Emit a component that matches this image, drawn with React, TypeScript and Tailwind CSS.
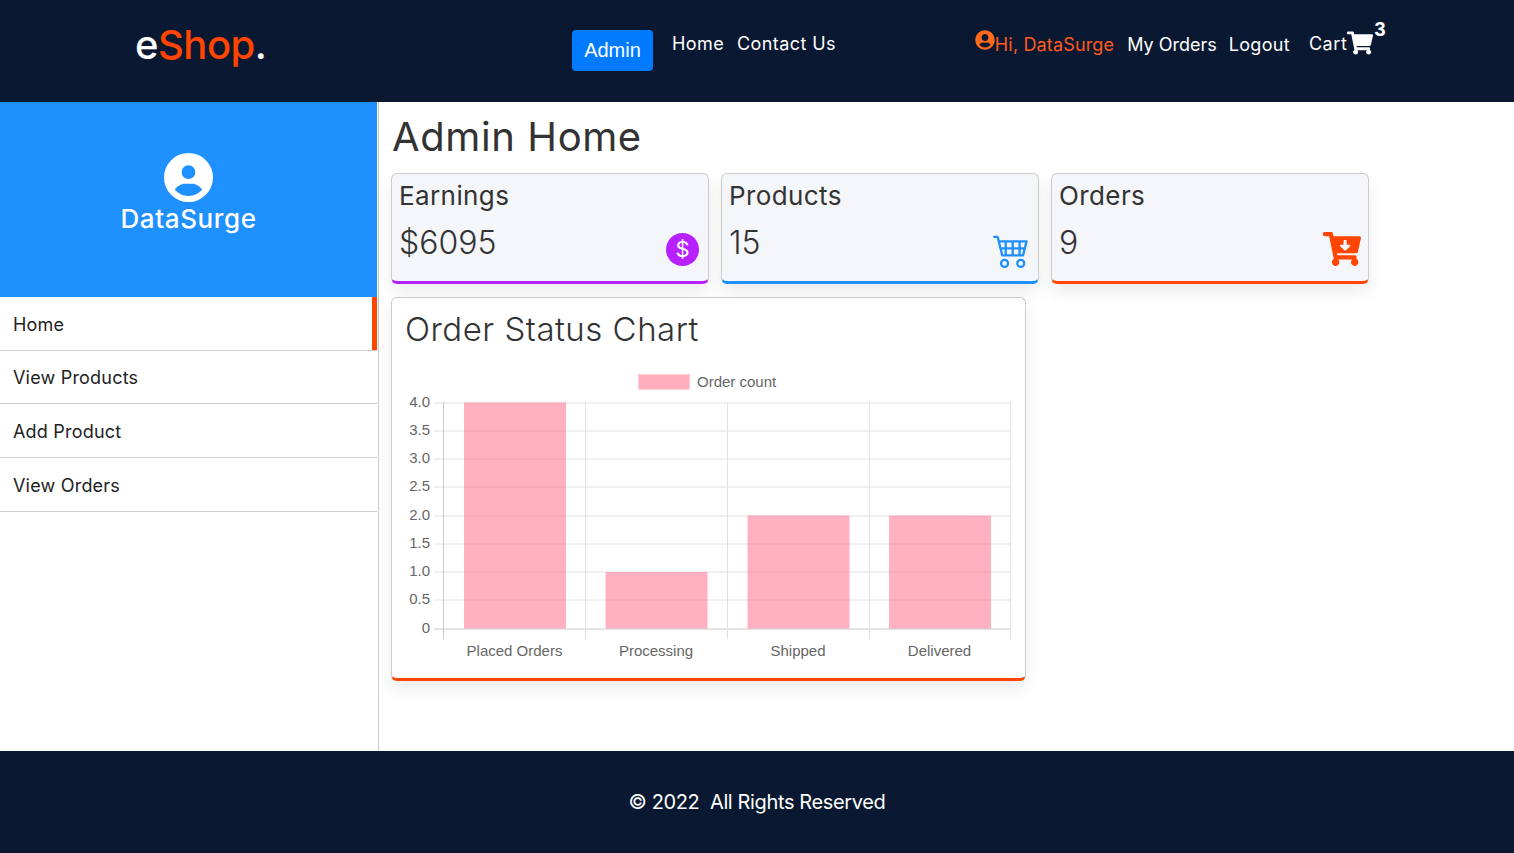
import { FaCartArrowDown, FaShoppingCart, FaUserCircle } from 'react-icons/fa';
import { FaCircleUser } from 'react-icons/fa6';
import { BsCart4 } from 'react-icons/bs';

const stats = [
  { title: 'Earnings', value: '$6095', bar: 'border-b-[#b721ff]' },
  { title: 'Products', value: '15', bar: 'border-b-[#1e90ff]' },
  { title: 'Orders', value: '9', bar: 'border-b-[#ff4500]' },
];

const sideLinks = [
  { label: 'Home', h: 'h-[54px]', active: true },
  { label: 'View Products', h: 'h-[53px]' },
  { label: 'Add Product', h: 'h-[54px]' },
  { label: 'View Orders', h: 'h-[54px]' },
];

const bars = [
  { label: 'Placed Orders', x: 464, count: 4 },
  { label: 'Processing', x: 605.5, count: 1 },
  { label: 'Shipped', x: 747.5, count: 2 },
  { label: 'Delivered', x: 889, count: 2 },
];

const yTicks = ['4.0', '3.5', '3.0', '2.5', '2.0', '1.5', '1.0', '0.5', '0'];
const xGrid = [443.5, 585.5, 727.5, 869.5, 1010.5];
const chartFont = '"Liberation Sans", Arial, sans-serif';

// svg origin sits at the page position of the chart box
function OrderChart() {
  const ox = 400;
  const oy = 370;
  const top = 402.5;
  const step = 28.25;
  return (
    <svg width="620" height="296" viewBox={`${ox} ${oy} 620 296`} className="block" style={{ fontFamily: chartFont }}>
      <rect x="638.5" y="374.5" width="51" height="15" fill="#ffacbf" stroke="#ffd0da" />
      <text x="697" y="387" fontSize="15" fill="#666">Order count</text>
      {yTicks.map((t, i) => {
        const y = Math.round(top + i * step) + 0.5;
        return (
          <g key={t}>
            <line x1="434" x2="1011" y1={y - 0.5} y2={y - 0.5} stroke={i === 8 ? '#c9c9c9' : '#e2e2e2'} />
            <text x="430" y={y + 3.5} fontSize="15" fill="#666" textAnchor="end">{t}</text>
          </g>
        );
      })}
      {xGrid.map((x, i) => (
        <line key={x} x1={x} x2={x} y1="402" y2="639" stroke={i === 0 ? '#c9c9c9' : '#e2e2e2'} />
      ))}
      {bars.map(b => (
        <g key={b.label}>
          <rect x={b.x} y={628.5 - b.count * 56.5} width="102" height={b.count * 56.5} fill="#ff6384" fillOpacity="0.5" />
          <text x={b.x + 50.5} y="656" fontSize="15" fill="#666" textAnchor="middle">{b.label}</text>
        </g>
      ))}
    </svg>
  );
}

export default function App() {
  return (
    <div className="flex min-h-[853px] flex-col bg-white font-['Inter','Liberation_Sans',sans-serif] text-[#333]">
      <header className="flex h-[102px] shrink-0 bg-[#0a1931] text-white">
        <div className="w-[572px] pl-[135px] pt-[19px] text-[40px] font-medium leading-[52px] tracking-[-0.5px]">
          e<span className="text-[#ff4500]">Shop</span>.
        </div>
        <button className="mt-[30px] h-[41px] w-[81px] rounded-[4px] bg-[#007bff] font-['Liberation_Sans',sans-serif] text-xl leading-[41px] text-white">
          Admin
        </button>
        <nav className="ml-[19px] flex gap-[13px] pt-[32px] text-lg leading-6 tracking-[0.4px]">
          <span>Home</span>
          <span>Contact Us</span>
        </nav>
        <div className="ml-[139px] flex items-start pt-[30px] text-lg leading-6">
          <FaUserCircle className="text-xl text-[#ff6a1f]" />
          <span className="mt-[3px] tracking-[0.15px] text-[#ff5a1f]">Hi, DataSurge</span>
          <span className="ml-[13px] mt-[3px]">My Orders</span>
          <span className="ml-[12px] mt-[3px] tracking-[0.3px]">Logout</span>
          <span className="ml-[19px] mt-[2px] tracking-[0.6px]">Cart</span>
          <span className="relative">
            <FaShoppingCart className="text-[26px]" />
            <span className="absolute left-[27px] top-[-13px] font-['Liberation_Sans',sans-serif] text-xl font-bold leading-6">3</span>
          </span>
        </div>
      </header>

      <div className="flex flex-1">
        <aside className="w-[379px] shrink-0 border-r border-[#ccc] pr-[1px]">
          <div className="flex h-[195px] flex-col items-center bg-[#1e90ff] pt-[51px] text-white">
            <FaCircleUser className="text-[49px]" />
            <div className="mt-[1px] text-[26px] font-medium leading-[32px] tracking-[0.6px]">DataSurge</div>
          </div>
          {sideLinks.map(link => (
            <div
              key={link.label}
              className={`relative flex items-center border-b border-[#ccc] pl-[13px] pt-[2px] text-lg tracking-[0.2px] text-[#222] ${link.h}`}
            >
              {link.label}
              {link.active && <div className="absolute bottom-0 right-0 top-0 w-[5px] bg-[#ff4500]" />}
            </div>
          ))}
        </aside>

        <main className="flex-1 pl-[12px]">
          <h1 className="ml-[1px] pt-[11px] text-[40px] font-normal leading-[48px] tracking-[0.6px] text-[#333]">Admin Home</h1>
          <div className="mt-[12px] flex gap-[12px]">
            {stats.map(s => (
              <div
                key={s.title}
                className={`relative h-[111px] w-[318px] rounded-md border border-b-[3px] border-[#ccc] bg-[#f4f6fa] px-[7px] shadow-[0_8px_16px_rgba(0,0,0,0.08)] ${s.bar}`}
              >
                <div className="pt-[5px] text-[26px] font-normal leading-[34px] tracking-[0.4px]">{s.title}</div>
                <div className="mt-[10px] text-[32px] font-light leading-[40px]">{s.value}</div>
                {s.title === 'Earnings' && (
                  <div className="absolute bottom-[15px] right-[9px] flex size-[33px] items-center justify-center rounded-full bg-[#b721ff] text-[22px] text-white">$</div>
                )}
                {s.title === 'Products' && <BsCart4 className="absolute bottom-[13px] right-[8px] size-[37px] text-[#1e90ff]" />}
                {s.title === 'Orders' && <FaCartArrowDown className="absolute bottom-[13px] right-[7px] size-[38px] text-[#ff4500]" />}
              </div>
            ))}
          </div>
          <div className="mt-[13px] h-[384px] w-[635px] rounded-md border border-b-[3px] border-[#ccc] border-b-[#ff4500] bg-white shadow-[0_8px_16px_rgba(0,0,0,0.08)]">
            <div className="pl-[13px] pt-[10px] text-[33px] font-light leading-[42px] tracking-[0.5px]">Order Status Chart</div>
            <div className="ml-[8px] mt-[20px]">
              <OrderChart />
            </div>
          </div>
        </main>
      </div>

      <footer className="flex h-[102px] shrink-0 items-center justify-center bg-[#0a1931] text-xl tracking-[-0.37px] text-white">
        © 2022&nbsp; All Rights Reserved
      </footer>
    </div>
  );
}
